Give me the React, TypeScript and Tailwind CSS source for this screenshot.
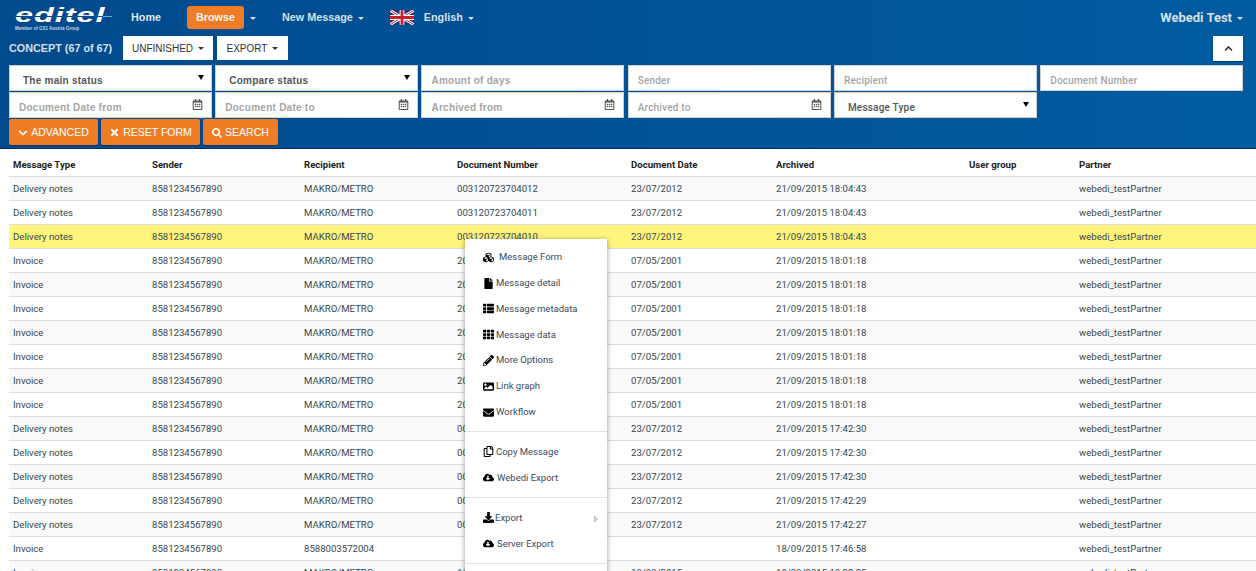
import { ReactNode } from "react";
import {
  FaChevronDown,
  FaChevronUp,
  FaCloudDownloadAlt,
  FaCubes,
  FaDownload,
  FaEnvelope,
  FaFile,
  FaImage,
  FaPencilAlt,
  FaRegCalendarAlt,
  FaRegCopy,
  FaSearch,
  FaTh,
  FaThList,
  FaTimes,
} from "react-icons/fa";

const rows = [
  ["Delivery notes", "8581234567890", "MAKRO/METRO", "003120723704012", "23/07/2012", "21/09/2015 18:04:43"],
  ["Delivery notes", "8581234567890", "MAKRO/METRO", "003120723704011", "23/07/2012", "21/09/2015 18:04:43"],
  ["Delivery notes", "8581234567890", "MAKRO/METRO", "003120723704010", "23/07/2012", "21/09/2015 18:04:43"],
  ["Invoice", "8581234567890", "MAKRO/METRO", "200105070000001", "07/05/2001", "21/09/2015 18:01:18"],
  ["Invoice", "8581234567890", "MAKRO/METRO", "200105070000002", "07/05/2001", "21/09/2015 18:01:18"],
  ["Invoice", "8581234567890", "MAKRO/METRO", "200105070000003", "07/05/2001", "21/09/2015 18:01:18"],
  ["Invoice", "8581234567890", "MAKRO/METRO", "200105070000004", "07/05/2001", "21/09/2015 18:01:18"],
  ["Invoice", "8581234567890", "MAKRO/METRO", "200105070000005", "07/05/2001", "21/09/2015 18:01:18"],
  ["Invoice", "8581234567890", "MAKRO/METRO", "200105070000006", "07/05/2001", "21/09/2015 18:01:18"],
  ["Invoice", "8581234567890", "MAKRO/METRO", "200105070000007", "07/05/2001", "21/09/2015 18:01:18"],
  ["Delivery notes", "8581234567890", "MAKRO/METRO", "003120723704009", "23/07/2012", "21/09/2015 17:42:30"],
  ["Delivery notes", "8581234567890", "MAKRO/METRO", "003120723704008", "23/07/2012", "21/09/2015 17:42:30"],
  ["Delivery notes", "8581234567890", "MAKRO/METRO", "003120723704007", "23/07/2012", "21/09/2015 17:42:30"],
  ["Delivery notes", "8581234567890", "MAKRO/METRO", "003120723704006", "23/07/2012", "21/09/2015 17:42:29"],
  ["Delivery notes", "8581234567890", "MAKRO/METRO", "003120723704005", "23/07/2012", "21/09/2015 17:42:27"],
  ["Invoice", "8581234567890", "8588003572004", "", "", "18/09/2015 17:46:58"],
  ["Invoice", "8581234567890", "MAKRO/METRO", "110920150000001", "18/09/2015", "18/09/2015 18:22:25"],
];

const gridCols = "grid grid-cols-[139px_152px_153px_174px_145px_193px_110px_1fr]";

function Caret() {
  return <span className="inline-block w-0 h-0 ml-[5px] align-middle border-x-[3px] border-x-transparent border-t-[3px] border-t-current" />;
}

function Field({ label, dark, date, select, narrow }: { label: string; dark?: boolean; date?: boolean; select?: boolean; narrow?: boolean }) {
  return (
    <div
      className={`relative bg-white border border-[#cfcfcf] flex items-end h-full text-[10px] pb-[2px] ${
        narrow ? "font-['Roboto',sans-serif] font-medium tracking-[0.2px]" : "font-['Liberation_Sans',sans-serif] font-bold tracking-[0.25px]"
      } ${dark ? "text-[#555] pl-[13px]" : "text-[#a5a5a5] pl-[9px]"}`}
    >
      {label}
      {date && <FaRegCalendarAlt className="absolute right-[8px] top-[6px] text-[#555] text-[11px]" />}
      {select && <span className="absolute right-[7px] top-[9px] w-0 h-0 border-x-[3px] border-x-transparent border-t-[5px] border-t-black" />}
    </div>
  );
}

function OrangeButton({ icon, label, w }: { icon: ReactNode; label: string; w: string }) {
  return (
    <button className={`${w} h-[26px] bg-[#f07d26] text-white rounded-[2px] shadow-[0_1px_1px_rgba(0,0,0,0.3)] flex items-center justify-center gap-[3px] pt-[1px] text-[10.5px] font-['Liberation_Sans',sans-serif]`}>
      {icon}
      {label}
    </button>
  );
}

function WhiteButton({ label, w }: { label: string; w: string }) {
  return (
    <button className={`${w} h-[24px] bg-white text-[#333] flex items-center justify-center text-[10px] font-['Liberation_Sans',sans-serif]`}>
      {label}
      <Caret />
    </button>
  );
}

function MenuItem({ icon, label, gap = "gap-[1px]", arrow }: { icon: ReactNode; label: string; gap?: string; arrow?: boolean }) {
  return (
    <div className={`relative h-[25.8px] pl-[17px] flex items-center ${gap} text-[9.5px] text-[#3c4a5c]`}>
      <span className="w-[13px] flex justify-center text-black text-[11px]">{icon}</span>
      {label}
      {arrow && <span className="absolute right-[9px] top-[10px] w-0 h-0 border-y-[4px] border-y-transparent border-l-[4px] border-l-[#c4c4c4]" />}
    </div>
  );
}

function Flag() {
  return (
    <svg width="24" height="15" viewBox="0 0 60 36" className="block">
      <rect width="60" height="36" fill="#23307a" />
      <path d="M0 0L60 36M60 0L0 36" stroke="#fff" strokeWidth="7" />
      <path d="M0 0L60 36M60 0L0 36" stroke="#c8202f" strokeWidth="2.5" />
      <path d="M30 0V36M0 18H60" stroke="#fff" strokeWidth="12" />
      <path d="M30 0V36M0 18H60" stroke="#c8202f" strokeWidth="7" />
    </svg>
  );
}

function Logo() {
  return (
    <div className="relative w-[100px] h-[35px] ml-[15px] pt-[4px] shrink-0 text-white font-['Liberation_Sans',sans-serif]">
      <div className="text-[20px] leading-[22px] font-bold italic tracking-[0.6px] scale-x-[1.62] origin-left">editel</div>
      {/* la raya que cruza el logo */}
      <div className="absolute left-[1px] top-[16px] w-[88px] h-px bg-[#004a8d]" />
      <div className="absolute left-[88px] top-[16px] w-[9px] h-px bg-[#7fa5c8]" />
      <div className="text-[4.5px] leading-[5px] text-[#c5d6e6] whitespace-nowrap">Member of GS1 Austria Group</div>
    </div>
  );
}

export default function App() {
  return (
    <div className="relative h-[571px] w-full overflow-hidden bg-white font-['Roboto',sans-serif]">
      {/* cabecera azul */}
      <div className="h-[149px] bg-gradient-to-r from-[#004a8d] to-[#005c9f] border-b border-[#00305e]">
        <div className="h-[35px] flex items-center text-[#d5e0ea] text-[10.8px] font-bold font-['Liberation_Sans',sans-serif]">
          <Logo />
          <span className="ml-[16px] text-[#dfe8f0]">Home</span>
          <span className="ml-[26px] w-[57px] h-[23px] bg-[#f07d26] rounded-[3px] text-[#f5f5f5] flex items-center justify-center">Browse</span>
          <span className="ml-[1px] w-[10px] text-center"><Caret /></span>
          <span className="ml-[27px]">New Message<Caret /></span>
          <span className="ml-[26px]"><Flag /></span>
          <span className="ml-[10px]">English<Caret /></span>
          <span className="ml-auto mr-[13px] text-[13px] font-['Roboto',sans-serif]">Webedi Test<Caret /></span>
        </div>

        <div className="h-[26px] mt-[1px] pl-[9px] pr-[13px] flex items-start gap-[4px]">
          <span className="w-[110px] text-[10.8px] font-bold text-[#d5e0ea] leading-[24px] font-['Liberation_Sans',sans-serif] whitespace-nowrap">CONCEPT (67 of 67)</span>
          <WhiteButton label="UNFINISHED" w="w-[90px]" />
          <WhiteButton label="EXPORT" w="w-[71px]" />
          <button className="ml-auto w-[30px] h-[25px] bg-white flex items-center justify-center shadow-[0_1px_1px_rgba(0,0,0,0.3)]">
            <FaChevronUp className="text-[9px] text-[#222]" />
          </button>
        </div>

        <div className="mt-[3px] ml-[9px] w-[1234px] grid grid-cols-6 gap-x-[3.4px] grid-rows-[26px_26px] gap-y-[1px]">
          <Field label="The main status" dark select />
          <Field label="Compare status" dark select />
          <Field label="Amount of days" />
          <Field label="Sender" narrow />
          <Field label="Recipient" narrow />
          <Field label="Document Number" narrow />
          <Field label="Document Date from" date />
          <Field label="Document Date to" date />
          <Field label="Archived from" date />
          <Field label="Archived to" date narrow />
          <Field label="Message Type" dark select narrow />
        </div>

        <div className="mt-[1px] pl-[9px] flex gap-[3px]">
          <OrangeButton icon={<FaChevronDown className="text-[10px]" />} label="ADVANCED" w="w-[89px]" />
          <OrangeButton icon={<FaTimes className="text-[11px]" />} label="RESET FORM" w="w-[99px]" />
          <OrangeButton icon={<FaSearch className="text-[10px]" />} label="SEARCH" w="w-[75px]" />
        </div>
      </div>

      {/* tabla */}
      <div className="pl-[9px] text-[9.6px] text-[#37474f]">
        <div className={`${gridCols} h-[28px] items-center pl-[4px] pt-[5px] font-bold text-[#222] border-b border-[#ddd]`}>
          {["Message Type", "Sender", "Recipient", "Document Number", "Document Date", "Archived", "User group", "Partner"].map((h) => (
            <span key={h}>{h}</span>
          ))}
        </div>
        {rows.map((r, i) => (
          <div
            key={i}
            className={`${gridCols} h-[24px] items-center pl-[4px] pt-[1px] border-b border-[#ddd] ${
              i === 2 ? "bg-[#fff47c]" : i % 2 === 0 ? "bg-[#f9f9f9]" : "bg-white"
            }`}
          >
            {r.map((c, j) => (
              <span key={j}>{c}</span>
            ))}
            <span />
            <span>webedi_testPartner</span>
          </div>
        ))}
      </div>

      {/* menú contextual */}
      <div className="absolute left-[465px] top-[239px] w-[142px] bg-white shadow-[0_1px_5px_rgba(0,0,0,0.4)] pt-[5.5px] pb-[20px]">
        <MenuItem icon={<FaCubes />} label="Message Form" gap="gap-[4px]" />
        <MenuItem icon={<FaFile />} label="Message detail" />
        <MenuItem icon={<FaThList />} label="Message metadata" />
        <MenuItem icon={<FaTh />} label="Message data" />
        <MenuItem icon={<FaPencilAlt />} label="More Options" />
        <MenuItem icon={<FaImage />} label="Link graph" />
        <MenuItem icon={<FaEnvelope />} label="Workflow" />
        <div className="h-px bg-[#e2e2e2] mt-[6px] mb-[7px]" />
        <MenuItem icon={<FaRegCopy />} label="Copy Message" />
        <MenuItem icon={<FaCloudDownloadAlt />} label="Webedi Export" gap="gap-[2px]" />
        <div className="h-px bg-[#e2e2e2] mt-[6.4px] mb-[7px]" />
        <MenuItem icon={<FaDownload />} label="Export" gap="gap-0" arrow />
        <MenuItem icon={<FaCloudDownloadAlt />} label="Server Export" gap="gap-[2px]" />
        <div className="h-px bg-[#e2e2e2] mt-[6.4px]" />
      </div>
    </div>
  );
}
